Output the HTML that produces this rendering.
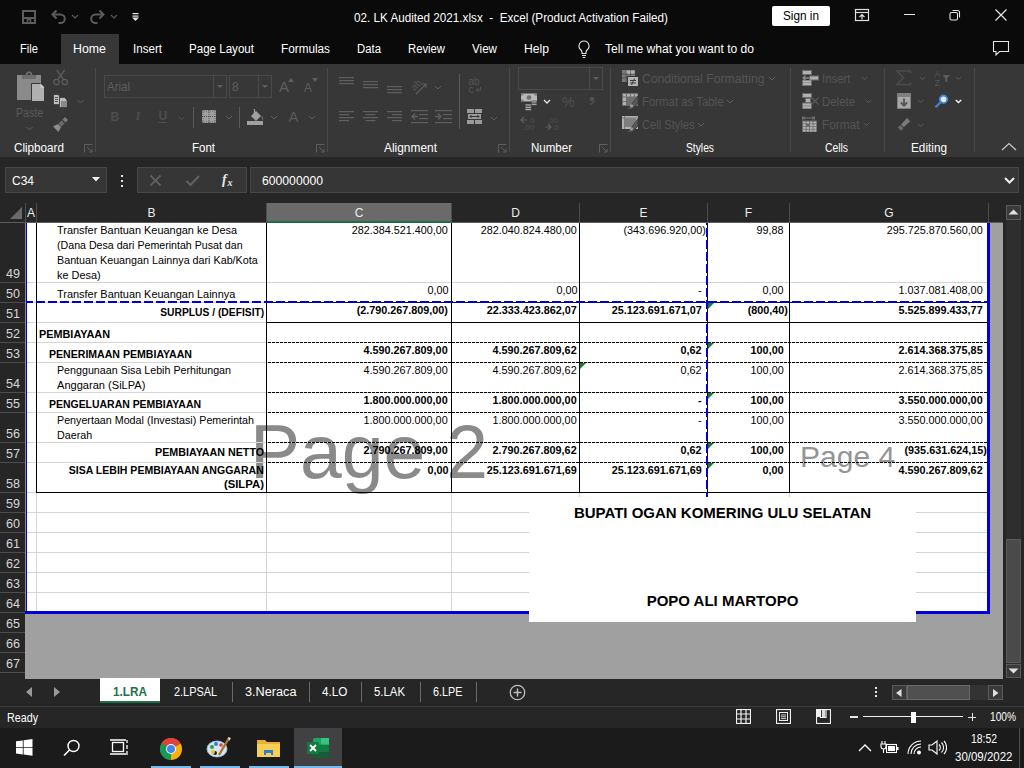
<!DOCTYPE html>
<html><head><meta charset="utf-8"><style>
html,body{margin:0;padding:0;width:1024px;height:768px;overflow:hidden;background:#262626;font-family:'Liberation Sans', sans-serif;}
#root{position:relative;width:1024px;height:768px;overflow:hidden;}
#root>div{position:absolute;}
</style></head><body><div id="root">
<div style="left:0px;top:0px;width:1024px;height:64px;background:#0a0a0a;"></div>
<svg style="position:absolute;left:21px;top:9px;" width="16" height="16" viewBox="0 0 16 16"><path d="M2 2h12v12h-12z" fill="none" stroke="#5c5c5c" stroke-width="2"/><path d="M2 9h12" stroke="#5c5c5c" stroke-width="2"/><path d="M6.5 14v-3.5h3v3.5" fill="none" stroke="#5c5c5c" stroke-width="1.5"/></svg>
<svg style="position:absolute;left:50px;top:8px;" width="17" height="17" viewBox="0 0 17 17"><path d="M3 6.5h7.5a4.3 4.3 0 0 1 0 8.6h-2" fill="none" stroke="#5c5c5c" stroke-width="2"/><path d="M6.5 2.5l-4 4l4 4" fill="none" stroke="#5c5c5c" stroke-width="2"/></svg>
<svg style="position:absolute;left:71px;top:14px;" width="8" height="5" viewBox="0 0 8 5"><path d="M1 1l3 3l3-3" fill="none" stroke="#5c5c5c" stroke-width="1.1"/></svg>
<svg style="position:absolute;left:89px;top:8px;" width="17" height="17" viewBox="0 0 17 17"><path d="M14 6.5h-7.5a4.3 4.3 0 0 0 0 8.6h2" fill="none" stroke="#5c5c5c" stroke-width="2"/><path d="M10.5 2.5l4 4l-4 4" fill="none" stroke="#5c5c5c" stroke-width="2"/></svg>
<svg style="position:absolute;left:110px;top:14px;" width="8" height="5" viewBox="0 0 8 5"><path d="M1 1l3 3l3-3" fill="none" stroke="#5c5c5c" stroke-width="1.1"/></svg>
<svg style="position:absolute;left:131px;top:12px;" width="9" height="10" viewBox="0 0 9 10"><rect x="1.5" y="1" width="6" height="1.2" fill="#e6e6e6"/><rect x="1.5" y="3.5" width="6" height="1.2" fill="#e6e6e6"/><path d="M1 5.5h7l-3.5 3.5z" fill="#e6e6e6"/></svg>
<div style="left:772px;top:6px;width:58px;height:20px;background:#ffffff;border-radius:2px"></div>
<svg style="position:absolute;left:854px;top:8px;" width="16" height="14" viewBox="0 0 16 14"><rect x="1.5" y="1.5" width="13" height="11" fill="none" stroke="#e0e0e0" stroke-width="1.2"/><path d="M1.5 4.5h13" stroke="#e0e0e0" stroke-width="1.2"/><path d="M8 11.5v-5M5.5 9l2.5-2.5l2.5 2.5" fill="none" stroke="#e0e0e0" stroke-width="1.2"/></svg>
<div style="left:904px;top:14px;width:11px;height:1px;background:#e6e6e6;"></div>
<svg style="position:absolute;left:948px;top:8px;" width="14" height="14" viewBox="0 0 14 14"><rect x="2" y="4.5" width="7.5" height="7.5" rx="1.5" fill="none" stroke="#e6e6e6" stroke-width="1.1"/><path d="M4.5 2.5h5a2 2 0 0 1 2 2v5" fill="none" stroke="#e6e6e6" stroke-width="1.1"/></svg>
<svg style="position:absolute;left:994px;top:8px;" width="14" height="14" viewBox="0 0 14 14"><path d="M1.5 1.5l11 11M12.5 1.5l-11 11" stroke="#e6e6e6" stroke-width="1.2"/></svg>
<div style="left:61px;top:34px;width:58px;height:30px;background:#373737;"></div>
<svg style="position:absolute;left:576px;top:39px;" width="16" height="20" viewBox="0 0 16 20"><path d="M8 2a5 5 0 0 0-3 9c.8.7 1 1.5 1 2.5v1h4v-1c0-1 .2-1.8 1-2.5a5 5 0 0 0-3-9z" fill="none" stroke="#e6e6e6" stroke-width="1.1"/><path d="M6 16.5h4M6.8 18.5h2.4" stroke="#e6e6e6" stroke-width="1.1"/></svg>
<svg style="position:absolute;left:991px;top:39px;" width="20" height="18" viewBox="0 0 20 18"><path d="M2.5 2.5h15v10h-9l-3.5 3.5v-3.5h-2.5z" fill="none" stroke="#e6e6e6" stroke-width="1.1"/></svg>
<div style="left:0px;top:64px;width:1024px;height:93px;background:#373737;"></div>
<div style="left:0px;top:157px;width:1024px;height:46px;background:#262626;"></div>
<div style="left:95px;top:68px;width:1px;height:84px;background:#4a4a4a;"></div>
<div style="left:327px;top:68px;width:1px;height:84px;background:#4a4a4a;"></div>
<div style="left:509px;top:68px;width:1px;height:84px;background:#4a4a4a;"></div>
<div style="left:610px;top:68px;width:1px;height:84px;background:#4a4a4a;"></div>
<div style="left:790px;top:68px;width:1px;height:84px;background:#4a4a4a;"></div>
<div style="left:884px;top:68px;width:1px;height:84px;background:#4a4a4a;"></div>
<div style="left:974px;top:68px;width:1px;height:84px;background:#4a4a4a;"></div>
<svg style="position:absolute;left:84px;top:144px;" width="9" height="9" viewBox="0 0 9 9"><path d="M0.5 8.5v-8h8" fill="none" stroke="#5f5f5f" stroke-width="1"/><path d="M3 3l5 5M8 5v3h-3" fill="none" stroke="#5f5f5f" stroke-width="1"/></svg>
<svg style="position:absolute;left:316px;top:144px;" width="9" height="9" viewBox="0 0 9 9"><path d="M0.5 8.5v-8h8" fill="none" stroke="#5f5f5f" stroke-width="1"/><path d="M3 3l5 5M8 5v3h-3" fill="none" stroke="#5f5f5f" stroke-width="1"/></svg>
<svg style="position:absolute;left:498px;top:144px;" width="9" height="9" viewBox="0 0 9 9"><path d="M0.5 8.5v-8h8" fill="none" stroke="#5f5f5f" stroke-width="1"/><path d="M3 3l5 5M8 5v3h-3" fill="none" stroke="#5f5f5f" stroke-width="1"/></svg>
<svg style="position:absolute;left:599px;top:144px;" width="9" height="9" viewBox="0 0 9 9"><path d="M0.5 8.5v-8h8" fill="none" stroke="#5f5f5f" stroke-width="1"/><path d="M3 3l5 5M8 5v3h-3" fill="none" stroke="#5f5f5f" stroke-width="1"/></svg>
<svg style="position:absolute;left:15px;top:70px;" width="32" height="33" viewBox="0 0 32 33"><path d="M2 5h5v2.5h14v-2.5h5v25h-24z" fill="#8a8a8a"/><rect x="7" y="5" width="14" height="4" rx="1" fill="#6e6e6e"/><circle cx="14" cy="4.6" r="2.4" fill="none" stroke="#6e6e6e" stroke-width="1.6"/><path d="M16.5 13.5h9l4 4v14h-13z" fill="#b0b0b0" stroke="#373737" stroke-width="1"/><path d="M25.5 13.5v4h4z" fill="#d0d0d0"/></svg>
<svg style="position:absolute;left:25px;top:126px;" width="9" height="5" viewBox="0 0 9 5"><path d="M1.5 1l3 3l3-3" fill="none" stroke="#5f5f5f" stroke-width="1"/></svg>
<svg style="position:absolute;left:52px;top:69px;" width="18" height="17" viewBox="0 0 18 17"><circle cx="4.5" cy="13" r="2.7" fill="none" stroke="#5e5e5e" stroke-width="1.2"/><circle cx="12.8" cy="13" r="2.7" fill="none" stroke="#5e5e5e" stroke-width="1.2"/><path d="M5.8 10.6L12.6 1M11.5 10.6L4.7 1" stroke="#5e5e5e" stroke-width="1.3"/></svg>
<svg style="position:absolute;left:52px;top:93px;" width="18" height="16" viewBox="0 0 18 16"><path d="M1.5 1.5h4.5l1.5 1.5v8.5h-6z" fill="#bdbdbd" stroke="#373737" stroke-width="0.8"/><path d="M3 4.5h3M3 6.5h3M3 8.5h3" stroke="#4a4a4a" stroke-width="0.9"/><path d="M7.5 4.5h5l2.5 2.5v7.5h-7.5z" fill="#bdbdbd" stroke="#373737" stroke-width="0.8"/><path d="M9 9h5M9 11h5M9 13h5" stroke="#4a4a4a" stroke-width="0.9"/></svg>
<svg style="position:absolute;left:77px;top:99px;" width="8" height="5" viewBox="0 0 8 5"><path d="M0.5 1l3 3l3-3" fill="none" stroke="#5f5f5f" stroke-width="1"/></svg>
<svg style="position:absolute;left:52px;top:116px;" width="18" height="17" viewBox="0 0 18 17"><path d="M1 10.5l5-2.5l3 3l-2.5 5z" fill="#8c8c8c"/><path d="M6.5 7.5l3-3l3 3l-3 3z" fill="#6a6a6a"/><path d="M10.5 3.5l2.5-2.5l3 3l-2.5 2.5z" fill="#7a7a7a"/></svg>
<div style="left:104px;top:75px;width:123px;height:23px;box-sizing:border-box;border:1px solid #4a4a4a;background:transparent;"></div>
<div style="left:213px;top:76px;width:1px;height:21px;background:#4a4a4a;"></div>
<svg style="position:absolute;left:217px;top:85px;" width="6" height="4" viewBox="0 0 6 4"><path d="M0 0h6l-3 3z" fill="#5f5f5f"/></svg>
<div style="left:229px;top:75px;width:43px;height:23px;box-sizing:border-box;border:1px solid #4a4a4a;background:transparent;"></div>
<div style="left:258px;top:76px;width:1px;height:21px;background:#4a4a4a;"></div>
<svg style="position:absolute;left:262px;top:85px;" width="6" height="4" viewBox="0 0 6 4"><path d="M0 0h6l-3 3z" fill="#5f5f5f"/></svg>
<svg style="position:absolute;left:288px;top:78px;" width="6" height="4" viewBox="0 0 6 4"><path d="M0 4l3-4l3 4z" fill="#5f5f5f"/></svg>
<svg style="position:absolute;left:312px;top:78px;" width="6" height="4" viewBox="0 0 6 4"><path d="M0 0h6l-3 4z" fill="#5f5f5f"/></svg>
<div style="left:158px;top:122px;width:9px;height:1px;background:#4e4e4e;"></div>
<svg style="position:absolute;left:178px;top:116px;" width="7" height="5" viewBox="0 0 7 5"><path d="M0.8 1l2.7 2.5l2.7-2.5" fill="none" stroke="#555" stroke-width="1"/></svg>
<div style="left:193px;top:107px;width:1px;height:21px;background:#5a5a5a;"></div>
<svg style="position:absolute;left:202px;top:110px;" width="14" height="13" viewBox="0 0 14 13"><rect x="0" y="0" width="14" height="13" fill="#a0a0a0"/><path d="M0 6.5h14M7 0v13" stroke="#373737" stroke-width="0.8" stroke-dasharray="1 1"/><path d="M0 1h14M0 12h14M1 0v13M13 0v13" stroke="#373737" stroke-width="0.6" stroke-dasharray="1 1"/></svg>
<svg style="position:absolute;left:225px;top:115px;" width="8" height="5" viewBox="0 0 8 5"><path d="M1 1l3 3l3-3" fill="none" stroke="#5f5f5f" stroke-width="1"/></svg>
<div style="left:239px;top:107px;width:1px;height:21px;background:#5a5a5a;"></div>
<svg style="position:absolute;left:247px;top:108px;" width="18" height="18" viewBox="0 0 18 18"><path d="M4 8l5-5l5 5l-5 5z" fill="#a0a0a0"/><path d="M7.5 1v6" stroke="#a0a0a0" stroke-width="1.2"/><path d="M14 8c1.5 1 2 2.5 1.5 4" fill="none" stroke="#606060" stroke-width="1.4"/><rect x="0" y="13" width="16" height="4" fill="#a0a0a0"/></svg>
<svg style="position:absolute;left:270px;top:115px;" width="8" height="5" viewBox="0 0 8 5"><path d="M1 1l3 3l3-3" fill="none" stroke="#5f5f5f" stroke-width="1"/></svg>
<svg style="position:absolute;left:308px;top:115px;" width="8" height="5" viewBox="0 0 8 5"><path d="M1 1l3 3l3-3" fill="none" stroke="#5f5f5f" stroke-width="1"/></svg>
<svg style="position:absolute;left:339px;top:77px;" width="16" height="10" viewBox="0 0 16 10"><rect x="0" y="0" width="15" height="1.2" fill="#5f5f5f"/><rect x="0" y="3" width="15" height="1.2" fill="#5f5f5f"/><rect x="0" y="6" width="15" height="1.2" fill="#5f5f5f"/></svg>
<svg style="position:absolute;left:363px;top:81px;" width="16" height="10" viewBox="0 0 16 10"><rect x="0" y="0" width="15" height="1.2" fill="#5f5f5f"/><rect x="0" y="3" width="15" height="1.2" fill="#5f5f5f"/><rect x="0" y="6" width="15" height="1.2" fill="#5f5f5f"/></svg>
<svg style="position:absolute;left:387px;top:86px;" width="16" height="10" viewBox="0 0 16 10"><rect x="0" y="0" width="15" height="1.2" fill="#5f5f5f"/><rect x="0" y="3" width="15" height="1.2" fill="#5f5f5f"/><rect x="0" y="6" width="15" height="1.2" fill="#5f5f5f"/></svg>
<svg style="position:absolute;left:410px;top:76px;" width="20" height="19" viewBox="0 0 20 19"><text x="0" y="12" font-size="10" fill="#555" transform="rotate(-45 6 8)" font-family="Liberation Sans">ab</text><path d="M6 18l10-10M12 8h4v4" fill="none" stroke="#5f5f5f" stroke-width="1.1"/></svg>
<svg style="position:absolute;left:434px;top:85px;" width="8" height="5" viewBox="0 0 8 5"><path d="M1 1l3 3l3-3" fill="none" stroke="#5f5f5f" stroke-width="1"/></svg>
<svg style="position:absolute;left:339px;top:111px;" width="16" height="12" viewBox="0 0 16 12"><rect x="0" y="0" width="15" height="1.2" fill="#5f5f5f"/><rect x="0" y="3" width="10" height="1.2" fill="#5f5f5f"/><rect x="0" y="6" width="15" height="1.2" fill="#5f5f5f"/><rect x="0" y="9" width="10" height="1.2" fill="#5f5f5f"/></svg>
<svg style="position:absolute;left:363px;top:111px;" width="16" height="12" viewBox="0 0 16 12"><rect x="0.0" y="0" width="15" height="1.2" fill="#5f5f5f"/><rect x="2.5" y="3" width="10" height="1.2" fill="#5f5f5f"/><rect x="0.0" y="6" width="15" height="1.2" fill="#5f5f5f"/><rect x="2.5" y="9" width="10" height="1.2" fill="#5f5f5f"/></svg>
<svg style="position:absolute;left:387px;top:111px;" width="16" height="12" viewBox="0 0 16 12"><rect x="0" y="0" width="15" height="1.2" fill="#5f5f5f"/><rect x="5" y="3" width="10" height="1.2" fill="#5f5f5f"/><rect x="0" y="6" width="15" height="1.2" fill="#5f5f5f"/><rect x="5" y="9" width="10" height="1.2" fill="#5f5f5f"/></svg>
<svg style="position:absolute;left:411px;top:110px;" width="18" height="14" viewBox="0 0 18 14"><rect x="0" y="0" width="17" height="1.2" fill="#5f5f5f"/><rect x="0" y="12" width="17" height="1.2" fill="#5f5f5f"/><rect x="8" y="4" width="9" height="1.2" fill="#5f5f5f"/><rect x="8" y="8" width="9" height="1.2" fill="#5f5f5f"/><path d="M1 6.5h6M4 3.5l-3 3l3 3" fill="none" stroke="#5f5f5f" stroke-width="1.4"/></svg>
<svg style="position:absolute;left:435px;top:110px;" width="18" height="14" viewBox="0 0 18 14"><rect x="0" y="0" width="17" height="1.2" fill="#5f5f5f"/><rect x="0" y="12" width="17" height="1.2" fill="#5f5f5f"/><rect x="8" y="4" width="9" height="1.2" fill="#5f5f5f"/><rect x="8" y="8" width="9" height="1.2" fill="#5f5f5f"/><path d="M0 6.5h6M3 3.5l3 3l-3 3" fill="none" stroke="#5f5f5f" stroke-width="1.4"/></svg>
<div style="left:459px;top:74px;width:1px;height:55px;background:#5a5a5a;"></div>
<svg style="position:absolute;left:468px;top:77px;" width="16" height="17" viewBox="0 0 16 17"><text x="0.5" y="8" font-size="10" fill="#555" font-family="Liberation Sans">ab</text><text x="0.5" y="16" font-size="10" fill="#555" font-family="Liberation Sans">c</text><path d="M12.5 10v3h-4M10 11.5l-1.8 1.5l1.8 1.5" fill="none" stroke="#555" stroke-width="1"/></svg>
<svg style="position:absolute;left:467px;top:109px;" width="16" height="16" viewBox="0 0 16 16"><rect x="0" y="0" width="15" height="15" fill="#9a9a9a"/><rect x="0" y="4" width="15" height="7" fill="#373737"/><rect x="1" y="5" width="13" height="5" fill="#9a9a9a"/><path d="M3 7.5h9M4.5 6l-1.5 1.5l1.5 1.5M10.5 6l1.5 1.5l-1.5 1.5" fill="none" stroke="#373737" stroke-width="1"/><path d="M7.5 0v4M7.5 11v4" stroke="#373737" stroke-width="1"/></svg>
<svg style="position:absolute;left:490px;top:116px;" width="8" height="5" viewBox="0 0 8 5"><path d="M1 1l3 3l3-3" fill="none" stroke="#5f5f5f" stroke-width="1"/></svg>
<div style="left:518px;top:67px;width:85px;height:23px;box-sizing:border-box;border:1px solid #4a4a4a;background:transparent;"></div>
<div style="left:589px;top:68px;width:1px;height:21px;background:#4a4a4a;"></div>
<svg style="position:absolute;left:593px;top:77px;" width="6" height="4" viewBox="0 0 6 4"><path d="M0 0h6l-3 3z" fill="#5f5f5f"/></svg>
<svg style="position:absolute;left:521px;top:93px;" width="17" height="18" viewBox="0 0 17 18"><rect x="0" y="0.5" width="16" height="8" fill="#b8b8b8"/><path d="M0 0.5h2.5v2H0zM13.5 0.5H16v2h-2.5zM0 6.5h2.5v2H0z" fill="#7a7a7a"/><circle cx="8" cy="4.5" r="2.3" fill="#6e6e6e"/><g fill="#b8b8b8" stroke="#373737" stroke-width="0.7"><rect x="10" y="8" width="6" height="2" rx="1"/><rect x="10" y="10.3" width="6" height="2" rx="1"/><rect x="4" y="11" width="6.5" height="2" rx="1"/><rect x="4" y="13.3" width="6.5" height="2" rx="1"/><rect x="4" y="15.6" width="6.5" height="2" rx="1"/></g></svg>
<svg style="position:absolute;left:543px;top:99px;" width="8" height="5" viewBox="0 0 8 5"><path d="M1 1l3 3l3-3" fill="none" stroke="#e6e6e6" stroke-width="1.3"/></svg>
<svg style="position:absolute;left:588px;top:96px;" width="8" height="9" viewBox="0 0 8 9"><circle cx="4" cy="3" r="2.3" fill="#505050"/><path d="M5.8 3.5c0 2.5-1.5 4.2-3.5 5" fill="none" stroke="#505050" stroke-width="1.6"/></svg>
<svg style="position:absolute;left:520px;top:115px;" width="18" height="17" viewBox="0 0 18 17"><path d="M1 5h6M4 2l-3 3l3 3" fill="none" stroke="#5f5f5f" stroke-width="1.2"/><text x="8" y="8" font-size="8" fill="#505050" font-family="Liberation Sans">.0</text><text x="3" y="15" font-size="8" fill="#505050" font-family="Liberation Sans">.00</text></svg>
<svg style="position:absolute;left:544px;top:115px;" width="18" height="17" viewBox="0 0 18 17"><text x="3" y="8" font-size="8" fill="#505050" font-family="Liberation Sans">.00</text><path d="M1 12h6M4 9l3 3l-3 3" fill="none" stroke="#5f5f5f" stroke-width="1.2"/><text x="8" y="15" font-size="8" fill="#505050" font-family="Liberation Sans">.0</text></svg>
<svg style="position:absolute;left:622px;top:70px;" width="17" height="17" viewBox="0 0 17 17"><rect x="0" y="0" width="13" height="12" fill="#7a7a7a"/><path d="M0 4h13M0 8h13M4.3 0v12M8.6 0v12" stroke="#4a4a4a" stroke-width="0.8"/><rect x="8.8" y="0.5" width="3.8" height="3.2" fill="#b0b0b0"/><rect x="4.5" y="0.5" width="3.8" height="3.2" fill="#b0b0b0"/><rect x="5.5" y="6.5" width="11" height="10" fill="#b4b4b4" stroke="#373737" stroke-width="1"/><path d="M8 10.5h6M8 13h6M12.5 8.5l-3 6.5" stroke="#3a3a3a" stroke-width="1"/></svg>
<svg style="position:absolute;left:768px;top:76px;" width="8" height="5" viewBox="0 0 8 5"><path d="M1 1l3 3l3-3" fill="none" stroke="#5f5f5f" stroke-width="1"/></svg>
<svg style="position:absolute;left:622px;top:93px;" width="17" height="17" viewBox="0 0 17 17"><rect x="0" y="0" width="16" height="13" fill="#6e6e6e"/><g fill="#b0b0b0"><rect x="1" y="1" width="3" height="2.5"/><rect x="5" y="1" width="3" height="2.5"/><rect x="9" y="1" width="3" height="2.5"/><rect x="13" y="1" width="2.5" height="2.5"/><rect x="1" y="4.5" width="3" height="3.5"/><rect x="1" y="9" width="3" height="3"/></g><path d="M3.5 16.5l4-2.5l8.5-11v7l-6 6z" fill="#5a5a5a" stroke="#373737" stroke-width="0.8"/><circle cx="9.5" cy="12.8" r="1.6" fill="#9a9a9a"/></svg>
<svg style="position:absolute;left:726px;top:99px;" width="8" height="5" viewBox="0 0 8 5"><path d="M1 1l3 3l3-3" fill="none" stroke="#5f5f5f" stroke-width="1"/></svg>
<svg style="position:absolute;left:622px;top:116px;" width="17" height="17" viewBox="0 0 17 17"><rect x="0" y="0" width="16" height="13" fill="#b0b0b0"/><rect x="3" y="2.5" width="11" height="8.5" fill="#7e7e7e"/><path d="M0 2h16M2.5 0v13" stroke="#6e6e6e" stroke-width="0.8"/><path d="M3.5 16.5l4-2.5l8.5-11v7l-6 6z" fill="#5a5a5a" stroke="#373737" stroke-width="0.8"/><circle cx="9.5" cy="12.8" r="1.6" fill="#9a9a9a"/></svg>
<svg style="position:absolute;left:697px;top:122px;" width="8" height="5" viewBox="0 0 8 5"><path d="M1 1l3 3l3-3" fill="none" stroke="#5f5f5f" stroke-width="1"/></svg>
<svg style="position:absolute;left:802px;top:70px;" width="18" height="17" viewBox="0 0 18 17"><rect x="0" y="0" width="10" height="5" fill="#6a6a6a"/><rect x="1" y="1" width="4" height="3" fill="#b0b0b0"/><rect x="5" y="1" width="4" height="3" fill="#b0b0b0"/><rect x="7" y="5.5" width="10" height="5" fill="#6a6a6a"/><rect x="8" y="6.5" width="4" height="3" fill="#b0b0b0"/><rect x="12" y="6.5" width="4" height="3" fill="#b0b0b0"/><rect x="0" y="10" width="10" height="6" fill="#6a6a6a"/><rect x="1" y="10.5" width="4" height="2.2" fill="#b0b0b0"/><rect x="5" y="10.5" width="4" height="2.2" fill="#b0b0b0"/><rect x="1" y="13" width="4" height="2.2" fill="#b0b0b0"/><rect x="5" y="13" width="4" height="2.2" fill="#b0b0b0"/><path d="M1 8h6M3.5 5.5L1 8l2.5 2.5" fill="none" stroke="#8a8a8a" stroke-width="1.3"/></svg>
<svg style="position:absolute;left:861px;top:76px;" width="7" height="5" viewBox="0 0 7 5"><path d="M0.8 1l2.7 2.5l2.7-2.5" fill="none" stroke="#5a5a5a" stroke-width="1"/></svg>
<svg style="position:absolute;left:802px;top:93px;" width="18" height="17" viewBox="0 0 18 17"><rect x="0" y="0" width="10" height="5" fill="#6a6a6a"/><rect x="1" y="1" width="4" height="3" fill="#b0b0b0"/><rect x="5" y="1" width="4" height="3" fill="#b0b0b0"/><rect x="3" y="5" width="6" height="5" fill="#6a6a6a"/><rect x="4" y="6" width="4" height="3" fill="#b0b0b0"/><rect x="0" y="9.5" width="10" height="6.5" fill="#6a6a6a"/><rect x="1" y="10.5" width="4" height="2.2" fill="#b0b0b0"/><rect x="5" y="10.5" width="4" height="2.2" fill="#b0b0b0"/><rect x="1" y="13.2" width="4" height="2.2" fill="#b0b0b0"/><rect x="5" y="13.2" width="4" height="2.2" fill="#b0b0b0"/><path d="M9.5 4.5l7 7M16.5 4.5l-7 7" stroke="#5a5a5a" stroke-width="1.2"/></svg>
<svg style="position:absolute;left:865px;top:99px;" width="7" height="5" viewBox="0 0 7 5"><path d="M0.8 1l2.7 2.5l2.7-2.5" fill="none" stroke="#5a5a5a" stroke-width="1"/></svg>
<svg style="position:absolute;left:802px;top:116px;" width="18" height="17" viewBox="0 0 18 17"><path d="M0.5 0.5v3M12.5 0.5v3M1 2h11M3 0.5L1 2l2 1.5M10 0.5L12 2l-2 1.5" fill="none" stroke="#7a7a7a" stroke-width="0.9"/><rect x="0" y="4.5" width="15" height="11.5" fill="#6a6a6a"/><rect x="1" y="5.5" width="2.7" height="2" fill="#b0b0b0"/><rect x="4.5" y="5.5" width="2.7" height="2" fill="#b0b0b0"/><rect x="8" y="5.5" width="2.7" height="2" fill="#b0b0b0"/><rect x="11.5" y="5.5" width="2.7" height="2" fill="#b0b0b0"/><rect x="1" y="8.2" width="2.7" height="2" fill="#b0b0b0"/><rect x="8" y="8.2" width="2.7" height="2" fill="#b0b0b0"/><rect x="11.5" y="8.2" width="2.7" height="2" fill="#b0b0b0"/><rect x="1" y="10.9" width="2.7" height="2" fill="#b0b0b0"/><rect x="4.5" y="10.9" width="2.7" height="2" fill="#b0b0b0"/><rect x="8" y="10.9" width="2.7" height="2" fill="#b0b0b0"/><rect x="11.5" y="10.9" width="2.7" height="2" fill="#b0b0b0"/><rect x="1" y="13.6" width="2.7" height="2" fill="#b0b0b0"/><rect x="4.5" y="13.6" width="2.7" height="2" fill="#b0b0b0"/><rect x="8" y="13.6" width="2.7" height="2" fill="#b0b0b0"/><rect x="11.5" y="13.6" width="2.7" height="2" fill="#b0b0b0"/></svg>
<svg style="position:absolute;left:863px;top:122px;" width="7" height="5" viewBox="0 0 7 5"><path d="M0.8 1l2.7 2.5l2.7-2.5" fill="none" stroke="#5a5a5a" stroke-width="1"/></svg>
<svg style="position:absolute;left:895px;top:69px;" width="18" height="18" viewBox="0 0 18 18"><path d="M15.5 4.2V2H2l6.5 6.8L2 15.5h13.5v-2.2" fill="none" stroke="#4c4c4c" stroke-width="1.6"/></svg>
<svg style="position:absolute;left:919px;top:76px;" width="7" height="5" viewBox="0 0 7 5"><path d="M0.8 1l2.7 2.5l2.7-2.5" fill="none" stroke="#5a5a5a" stroke-width="1"/></svg>
<svg style="position:absolute;left:934px;top:69px;" width="18" height="18" viewBox="0 0 18 18"><text x="0.5" y="7.5" font-size="8.5" fill="#555" font-family="Liberation Sans">A</text><text x="0.8" y="17" font-size="8.5" fill="#555" font-family="Liberation Sans">Z</text><path d="M8.5 6h7.5l-2.8 3.2v3.8h-2v-3.8z" fill="#5c5c5c"/></svg>
<svg style="position:absolute;left:955px;top:76px;" width="7" height="5" viewBox="0 0 7 5"><path d="M0.8 1l2.7 2.5l2.7-2.5" fill="none" stroke="#5a5a5a" stroke-width="1"/></svg>
<svg style="position:absolute;left:897px;top:93px;" width="15" height="16" viewBox="0 0 15 16"><rect x="0" y="0" width="14" height="16" fill="#7e7e7e"/><rect x="1" y="4" width="12" height="11" fill="#a8a8a8"/><path d="M7 5.5v7.5M3.8 9.5l3.2 3.2l3.2-3.2" fill="none" stroke="#555" stroke-width="1.8"/></svg>
<svg style="position:absolute;left:917px;top:99px;" width="7" height="5" viewBox="0 0 7 5"><path d="M0.8 1l2.7 2.5l2.7-2.5" fill="none" stroke="#5a5a5a" stroke-width="1"/></svg>
<svg style="position:absolute;left:935px;top:94px;" width="15" height="14" viewBox="0 0 15 14"><circle cx="8.5" cy="5.3" r="3.8" fill="#e6e6e6" stroke="#3d85d0" stroke-width="1.8"/><path d="M5.8 8l-4.6 4.6" stroke="#3d85d0" stroke-width="2.2" stroke-linecap="round"/></svg>
<svg style="position:absolute;left:955px;top:99px;" width="7" height="5" viewBox="0 0 7 5"><path d="M0.8 1l2.7 2.5l2.7-2.5" fill="none" stroke="#f0f0f0" stroke-width="1.6"/></svg>
<svg style="position:absolute;left:897px;top:116px;" width="14" height="15" viewBox="0 0 14 15"><path d="M4 8.5l6-6.5l3.2 3.2l-6.5 6z" fill="#7a7a7a"/><path d="M0.8 11.5l2.5-2.5l3.2 3.2l-2.5 2.5z" fill="#6a6a6a"/></svg>
<svg style="position:absolute;left:917px;top:123px;" width="7" height="5" viewBox="0 0 7 5"><path d="M0.8 1l2.7 2.5l2.7-2.5" fill="none" stroke="#5a5a5a" stroke-width="1"/></svg>
<svg style="position:absolute;left:1001px;top:142px;" width="16" height="10" viewBox="0 0 16 10"><path d="M1 8l7-6.5l7 6.5" fill="none" stroke="#c8c8c8" stroke-width="1.2"/></svg>
<div style="left:5px;top:167px;width:102px;height:26px;box-sizing:border-box;border:1px solid #474747;background:#363636;"></div>
<svg style="position:absolute;left:92px;top:177px;" width="9" height="5" viewBox="0 0 9 5"><path d="M0 0h8l-4 4.5z" fill="#f0f0f0"/></svg>
<div style="left:121px;top:175px;width:2px;height:2px;background:#e6e6e6;"></div>
<div style="left:121px;top:180px;width:2px;height:2px;background:#e6e6e6;"></div>
<div style="left:121px;top:185px;width:2px;height:2px;background:#e6e6e6;"></div>
<div style="left:137px;top:167px;width:110px;height:26px;box-sizing:border-box;border:1px solid #474747;background:#363636;"></div>
<svg style="position:absolute;left:149px;top:174px;" width="13" height="13" viewBox="0 0 13 13"><path d="M1.5 1.5l10 10M11.5 1.5l-10 10" stroke="#5f5f5f" stroke-width="1.8"/></svg>
<svg style="position:absolute;left:185px;top:174px;" width="15" height="13" viewBox="0 0 15 13"><path d="M1.5 7l4 4l8.5-9" fill="none" stroke="#5f5f5f" stroke-width="2.2"/></svg>
<div style="left:250px;top:167px;width:769px;height:26px;box-sizing:border-box;border:1px solid #474747;background:#363636;"></div>
<svg style="position:absolute;left:1004px;top:177px;" width="11" height="7" viewBox="0 0 11 7"><path d="M1 1l4.5 4.5l4.5-4.5" fill="none" stroke="#f0f0f0" stroke-width="2"/></svg>
<div style="left:0px;top:203px;width:1003px;height:20px;background:#262626;"></div>
<div style="left:0px;top:222px;width:1003px;height:1px;background:#5c5c5c;"></div>
<svg style="position:absolute;left:10px;top:207px;" width="13" height="13" viewBox="0 0 13 13"><path d="M12 0v12h-12z" fill="#6a6a6a"/></svg>
<div style="left:266px;top:203px;width:185px;height:19px;background:#6a6a6a;"></div>
<div style="left:266px;top:221px;width:185px;height:2px;background:#1d7044;"></div>
<div style="left:25px;top:203px;width:1px;height:19px;background:#4d4d4d;"></div>
<div style="left:36px;top:203px;width:1px;height:19px;background:#4d4d4d;"></div>
<div style="left:266px;top:203px;width:1px;height:19px;background:#4d4d4d;"></div>
<div style="left:451px;top:203px;width:1px;height:19px;background:#4d4d4d;"></div>
<div style="left:579px;top:203px;width:1px;height:19px;background:#4d4d4d;"></div>
<div style="left:707px;top:203px;width:1px;height:19px;background:#4d4d4d;"></div>
<div style="left:789px;top:203px;width:1px;height:19px;background:#4d4d4d;"></div>
<div style="left:988px;top:203px;width:1px;height:19px;background:#4d4d4d;"></div>
<div style="left:25px;top:223px;width:978px;height:456px;background:#a0a0a0;"></div>
<div style="left:26px;top:223px;width:962px;height:391px;background:#ffffff;"></div>
<div style="position:absolute;left:250px;top:406.5px;font-size:76px;line-height:90px;color:rgba(128,128,128,0.92);white-space:pre;transform:scaleX(0.988);transform-origin:left top;">Page 2</div>
<div style="position:absolute;left:800px;top:438.5px;font-size:30px;line-height:36px;color:#949494;white-space:pre;">Page 4</div>
<div style="left:0px;top:223px;width:25px;height:456px;background:#262626;"></div>
<div style="left:0px;top:282px;width:25px;height:1px;background:#4d4d4d;"></div>
<div style="left:0px;top:302px;width:25px;height:1px;background:#4d4d4d;"></div>
<div style="left:0px;top:322px;width:25px;height:1px;background:#4d4d4d;"></div>
<div style="left:0px;top:342px;width:25px;height:1px;background:#4d4d4d;"></div>
<div style="left:0px;top:362px;width:25px;height:1px;background:#4d4d4d;"></div>
<div style="left:0px;top:392px;width:25px;height:1px;background:#4d4d4d;"></div>
<div style="left:0px;top:412px;width:25px;height:1px;background:#4d4d4d;"></div>
<div style="left:0px;top:442px;width:25px;height:1px;background:#4d4d4d;"></div>
<div style="left:0px;top:462px;width:25px;height:1px;background:#4d4d4d;"></div>
<div style="left:0px;top:492px;width:25px;height:1px;background:#4d4d4d;"></div>
<div style="left:0px;top:512px;width:25px;height:1px;background:#4d4d4d;"></div>
<div style="left:0px;top:532px;width:25px;height:1px;background:#4d4d4d;"></div>
<div style="left:0px;top:552px;width:25px;height:1px;background:#4d4d4d;"></div>
<div style="left:0px;top:572px;width:25px;height:1px;background:#4d4d4d;"></div>
<div style="left:0px;top:592px;width:25px;height:1px;background:#4d4d4d;"></div>
<div style="left:0px;top:612px;width:25px;height:1px;background:#4d4d4d;"></div>
<div style="left:0px;top:632px;width:25px;height:1px;background:#4d4d4d;"></div>
<div style="left:0px;top:652px;width:25px;height:1px;background:#4d4d4d;"></div>
<div style="left:0px;top:672px;width:25px;height:1px;background:#4d4d4d;"></div>
<div style="left:0px;top:692px;width:25px;height:1px;background:#4d4d4d;"></div>
<div style="left:26px;top:282px;width:962px;height:1px;background:#d4d4d4;"></div>
<div style="left:26px;top:302px;width:962px;height:1px;background:#d4d4d4;"></div>
<div style="left:26px;top:322px;width:962px;height:1px;background:#d4d4d4;"></div>
<div style="left:26px;top:342px;width:962px;height:1px;background:#d4d4d4;"></div>
<div style="left:26px;top:362px;width:962px;height:1px;background:#d4d4d4;"></div>
<div style="left:26px;top:392px;width:962px;height:1px;background:#d4d4d4;"></div>
<div style="left:26px;top:412px;width:962px;height:1px;background:#d4d4d4;"></div>
<div style="left:26px;top:442px;width:962px;height:1px;background:#d4d4d4;"></div>
<div style="left:26px;top:462px;width:962px;height:1px;background:#d4d4d4;"></div>
<div style="left:26px;top:492px;width:962px;height:1px;background:#d4d4d4;"></div>
<div style="left:26px;top:512px;width:962px;height:1px;background:#d4d4d4;"></div>
<div style="left:26px;top:532px;width:962px;height:1px;background:#d4d4d4;"></div>
<div style="left:26px;top:552px;width:962px;height:1px;background:#d4d4d4;"></div>
<div style="left:26px;top:572px;width:962px;height:1px;background:#d4d4d4;"></div>
<div style="left:26px;top:592px;width:962px;height:1px;background:#d4d4d4;"></div>
<div style="left:26px;top:612px;width:962px;height:1px;background:#d4d4d4;"></div>
<div style="left:36px;top:223px;width:1px;height:390px;background:#d4d4d4;"></div>
<div style="left:266px;top:223px;width:1px;height:390px;background:#d4d4d4;"></div>
<div style="left:451px;top:223px;width:1px;height:390px;background:#d4d4d4;"></div>
<div style="left:579px;top:223px;width:1px;height:390px;background:#d4d4d4;"></div>
<div style="left:707px;top:223px;width:1px;height:390px;background:#d4d4d4;"></div>
<div style="left:789px;top:223px;width:1px;height:390px;background:#d4d4d4;"></div>
<div style="left:36px;top:223px;width:1px;height:270px;background:#000000;"></div>
<div style="left:266px;top:223px;width:1px;height:270px;background:#000000;"></div>
<div style="left:451px;top:223px;width:1px;height:270px;background:#000000;"></div>
<div style="left:579px;top:223px;width:1px;height:270px;background:#000000;"></div>
<div style="left:707px;top:223px;width:1px;height:270px;background:#000000;"></div>
<div style="left:789px;top:223px;width:1px;height:270px;background:#000000;"></div>
<div style="left:266px;top:302px;width:722px;height:1px;background:#000000;"></div>
<div style="left:266px;top:322px;width:722px;height:1px;background:#000000;"></div>
<div style="left:267px;top:342px;width:720px;height:1px;background:transparent;background-image:repeating-linear-gradient(90deg,#000 0 3px,transparent 3px 4px);background-position:-3px 0;"></div>
<div style="left:267px;top:362px;width:720px;height:1px;background:transparent;background-image:repeating-linear-gradient(90deg,#000 0 3px,transparent 3px 4px);background-position:-3px 0;"></div>
<div style="left:267px;top:392px;width:720px;height:1px;background:transparent;background-image:repeating-linear-gradient(90deg,#000 0 3px,transparent 3px 4px);background-position:-3px 0;"></div>
<div style="left:267px;top:412px;width:720px;height:1px;background:transparent;background-image:repeating-linear-gradient(90deg,#000 0 3px,transparent 3px 4px);background-position:-3px 0;"></div>
<div style="left:267px;top:442px;width:720px;height:1px;background:transparent;background-image:repeating-linear-gradient(90deg,#000 0 3px,transparent 3px 4px);background-position:-3px 0;"></div>
<div style="left:267px;top:462px;width:720px;height:1px;background:transparent;background-image:repeating-linear-gradient(90deg,#000 0 3px,transparent 3px 4px);background-position:-3px 0;"></div>
<div style="left:36px;top:492px;width:952px;height:1px;background:#000000;"></div>
<div style="left:25px;top:223px;width:1px;height:390px;background:#8a8a8a;"></div>
<div style="left:26px;top:223px;width:1px;height:391px;background:#0000d4;"></div>
<div style="left:987px;top:223px;width:3px;height:391px;background:#0000d4;"></div>
<div style="left:25px;top:611px;width:965px;height:3px;background:#0000d4;"></div>
<div style="left:26px;top:301px;width:961px;height:2px;background:transparent;background-image:repeating-linear-gradient(90deg,#0000d4 0 9px,transparent 9px 12px);background-position:-2px 0;"></div>
<div style="left:706px;top:223px;width:2px;height:387px;background:transparent;background-image:repeating-linear-gradient(180deg,#0000d4 0 9px,transparent 9px 12px);background-position:0 -7px;"></div>
<svg style="position:absolute;left:708px;top:303px;" width="6" height="6" viewBox="0 0 6 6"><path d="M0 0h6L0 6z" fill="#127c2c"/></svg>
<svg style="position:absolute;left:708px;top:343px;" width="6" height="6" viewBox="0 0 6 6"><path d="M0 0h6L0 6z" fill="#127c2c"/></svg>
<svg style="position:absolute;left:708px;top:393px;" width="6" height="6" viewBox="0 0 6 6"><path d="M0 0h6L0 6z" fill="#127c2c"/></svg>
<svg style="position:absolute;left:708px;top:443px;" width="6" height="6" viewBox="0 0 6 6"><path d="M0 0h6L0 6z" fill="#127c2c"/></svg>
<svg style="position:absolute;left:708px;top:463px;" width="6" height="6" viewBox="0 0 6 6"><path d="M0 0h6L0 6z" fill="#127c2c"/></svg>
<svg style="position:absolute;left:580px;top:363px;" width="6" height="6" viewBox="0 0 6 6"><path d="M0 0h6L0 6z" fill="#127c2c"/></svg>
<div style="left:1003px;top:203px;width:21px;height:475px;background:#262626;"></div>
<div style="left:1006px;top:205px;width:15px;height:15px;box-sizing:border-box;border:1px solid #5a5a5a;background:#3a3a3a;"></div>
<svg style="position:absolute;left:1008px;top:209px;" width="11" height="6" viewBox="0 0 11 6"><path d="M0.5 5.5l5-5l5 5z" fill="#e0e0e0"/></svg>
<div style="left:1006px;top:220px;width:15px;height:444px;background:#2e2e2e;"></div>
<div style="left:1006px;top:539px;width:15px;height:124px;box-sizing:border-box;border:1px solid #5a5a5a;background:#4a4a4a;"></div>
<div style="left:1006px;top:664px;width:15px;height:14px;box-sizing:border-box;border:1px solid #5a5a5a;background:#3a3a3a;"></div>
<svg style="position:absolute;left:1008px;top:668px;" width="11" height="6" viewBox="0 0 11 6"><path d="M0.5 0.5h10l-5 5z" fill="#e0e0e0"/></svg>
<div style="left:0px;top:679px;width:1024px;height:27px;background:#262626;"></div>
<svg style="position:absolute;left:26px;top:687px;" width="7" height="10" viewBox="0 0 7 10"><path d="M6 0v10L0 5z" fill="#9a9a9a"/></svg>
<svg style="position:absolute;left:54px;top:687px;" width="7" height="10" viewBox="0 0 7 10"><path d="M0 0v10l6-5z" fill="#9a9a9a"/></svg>
<div style="left:100px;top:678px;width:60px;height:25px;background:#ffffff;"></div>
<div style="left:100px;top:701px;width:60px;height:2px;background:#1e7145;"></div>
<div style="left:232px;top:682px;width:1px;height:20px;background:#6a6a6a;"></div>
<div style="left:309px;top:682px;width:1px;height:20px;background:#6a6a6a;"></div>
<div style="left:361px;top:682px;width:1px;height:20px;background:#6a6a6a;"></div>
<div style="left:420px;top:682px;width:1px;height:20px;background:#6a6a6a;"></div>
<div style="left:476px;top:682px;width:1px;height:20px;background:#6a6a6a;"></div>
<svg style="position:absolute;left:509px;top:684px;" width="17" height="17" viewBox="0 0 17 17"><circle cx="8.5" cy="8.5" r="7.2" fill="none" stroke="#bdbdbd" stroke-width="1.3"/><path d="M8.5 4.5v8M4.5 8.5h8" stroke="#bdbdbd" stroke-width="1.5"/></svg>
<div style="left:875px;top:687px;width:2px;height:2px;background:#e6e6e6;"></div>
<div style="left:875px;top:691px;width:2px;height:2px;background:#e6e6e6;"></div>
<div style="left:875px;top:695px;width:2px;height:2px;background:#e6e6e6;"></div>
<div style="left:892px;top:685px;width:111px;height:15px;background:#333333;"></div>
<div style="left:892px;top:685px;width:15px;height:15px;box-sizing:border-box;border:1px solid #5a5a5a;background:#3a3a3a;"></div>
<svg style="position:absolute;left:896px;top:689px;" width="6" height="8" viewBox="0 0 6 8"><path d="M5.5 0v8L0 4z" fill="#e0e0e0"/></svg>
<div style="left:907px;top:685px;width:63px;height:15px;box-sizing:border-box;border:1px solid #6a6a6a;background:#505050;"></div>
<div style="left:988px;top:685px;width:15px;height:15px;box-sizing:border-box;border:1px solid #5a5a5a;background:#3a3a3a;"></div>
<svg style="position:absolute;left:993px;top:689px;" width="6" height="8" viewBox="0 0 6 8"><path d="M0 0v8l5.5-4z" fill="#e0e0e0"/></svg>
<div style="left:0px;top:706px;width:1024px;height:1px;background:#3c3c3c;"></div>
<div style="left:0px;top:707px;width:1024px;height:21px;background:#262626;"></div>
<svg style="position:absolute;left:736px;top:709px;" width="15" height="15" viewBox="0 0 15 15"><rect x="0.5" y="0.5" width="14" height="14" fill="none" stroke="#f0f0f0" stroke-width="1.2"/><path d="M5 0v15M10 0v15M0 5h15M0 10h15" stroke="#f0f0f0" stroke-width="1.2"/></svg>
<svg style="position:absolute;left:776px;top:709px;" width="15" height="15" viewBox="0 0 15 15"><rect x="0.5" y="0.5" width="14" height="14" fill="none" stroke="#f0f0f0" stroke-width="1.2"/><rect x="3.5" y="3.5" width="8" height="8" fill="none" stroke="#f0f0f0" stroke-width="1"/><path d="M5 6h5M5 7.8h5M5 9.6h5" stroke="#f0f0f0" stroke-width="0.8"/></svg>
<svg style="position:absolute;left:816px;top:709px;" width="15" height="15" viewBox="0 0 15 15"><rect x="0.5" y="0.5" width="14" height="14" fill="none" stroke="#f0f0f0" stroke-width="1.2"/><rect x="1" y="1" width="3" height="7" fill="#f0f0f0"/><rect x="6" y="1" width="3" height="7" fill="#dcdcdc"/><path d="M4.5 1v7.5h5.5v-7.5" fill="none" stroke="#f0f0f0" stroke-width="1.2"/></svg>
<div style="left:850px;top:716px;width:8px;height:1.5px;background:#e6e6e6;"></div>
<div style="left:863px;top:716px;width:100px;height:1px;background:#f0f0f0;"></div>
<div style="left:911px;top:712px;width:5px;height:11px;background:#ffffff;"></div>
<div style="left:968px;top:716.5px;width:8px;height:1.2px;background:#e6e6e6;"></div>
<div style="left:971.5px;top:713px;width:1.2px;height:8px;background:#e6e6e6;"></div>
<div style="left:0px;top:728px;width:1024px;height:40px;background:#1c1b1c;"></div>
<svg style="position:absolute;left:16px;top:739px;" width="17" height="17" viewBox="0 0 17 17"><path d="M0 2.3l6.8-0.9v6.6H0zM7.6 1.3L16.5 0v8H7.6zM0 8.8h6.8v6.6L0 14.5zM7.6 8.8h8.9v8L7.6 15.6z" fill="#ffffff"/></svg>
<svg style="position:absolute;left:63px;top:739px;" width="18" height="18" viewBox="0 0 18 18"><circle cx="10.5" cy="7" r="5.5" fill="none" stroke="#ffffff" stroke-width="1.4"/><path d="M6.5 11l-5.5 5.5" stroke="#ffffff" stroke-width="1.6"/></svg>
<svg style="position:absolute;left:110px;top:739px;" width="19" height="17" viewBox="0 0 19 17"><rect x="2.5" y="3.5" width="11" height="9" fill="none" stroke="#fff" stroke-width="1.3"/><path d="M0 1h16M0 15h16" stroke="#fff" stroke-width="1.3"/><path d="M17 1v3M17 6v4M17 12v4" stroke="#fff" stroke-width="1.3"/></svg>
<svg style="position:absolute;left:159px;top:737px;" width="24" height="24" viewBox="0 0 24 24"><circle cx="12" cy="12" r="11" fill="#db4437"/><path d="M12 12L2.5 6.5A11 11 0 0 0 12 23z" fill="#0f9d58"/><path d="M12 12L12 23A11 11 0 0 0 21.5 6.5z" fill="#f4b400"/><path d="M12 12L21.5 6.5A11 11 0 0 0 2.5 6.5z" fill="#db4437"/><path d="M12 12L2.5 6.5L7.2 14.8z" fill="#0f9d58"/><circle cx="12" cy="12" r="5" fill="#fff"/><circle cx="12" cy="12" r="4" fill="#4285f4"/></svg>
<svg style="position:absolute;left:206px;top:736px;" width="26" height="24" viewBox="0 0 26 24"><ellipse cx="11" cy="13" rx="10" ry="8" fill="#d4e6f2" stroke="#9cc2dc" stroke-width="0.8"/><circle cx="9" cy="17" r="2" fill="#1c1c1c"/><circle cx="6" cy="11" r="2" fill="#2d9c4a"/><circle cx="10" cy="8" r="2" fill="#3a7bd5"/><circle cx="15" cy="9" r="1.8" fill="#e04040"/><circle cx="7" cy="16" r="2" fill="#f0c020"/><path d="M13 19L23 2" stroke="#b07030" stroke-width="2.4"/><path d="M22 1l3 1-2 3z" fill="#e8e8e8"/></svg>
<svg style="position:absolute;left:256px;top:738px;" width="25" height="20" viewBox="0 0 25 20"><path d="M1 2h8l2 2h13v15H1z" fill="#e8b035"/><rect x="1" y="6" width="23" height="13" fill="#f6cf57"/><rect x="8" y="12" width="9" height="5" fill="#2b7cd3"/><rect x="10" y="15" width="5" height="4" fill="#f6cf57"/></svg>
<div style="left:294px;top:728px;width:48px;height:40px;background:#414042;"></div>
<svg style="position:absolute;left:306px;top:737px;" width="24" height="22" viewBox="0 0 24 22"><rect x="7" y="1" width="16" height="20" rx="1.5" fill="#21a366"/><rect x="7" y="7.5" width="16" height="7" fill="#107c41"/><rect x="15" y="1" width="8" height="6.5" fill="#33c481"/><rect x="7" y="14.5" width="16" height="6.5" fill="#185c37"/><rect x="1" y="5" width="12" height="12" rx="1" fill="#107c41"/><path d="M4 8l6 6M10 8l-6 6" stroke="#fff" stroke-width="1.8"/></svg>
<div style="left:151px;top:766px;width:40px;height:2px;background:#76b9ed;"></div>
<div style="left:200px;top:766px;width:40px;height:2px;background:#76b9ed;"></div>
<div style="left:249px;top:766px;width:40px;height:2px;background:#76b9ed;"></div>
<div style="left:294px;top:766px;width:48px;height:2px;background:#76b9ed;"></div>
<svg style="position:absolute;left:858px;top:743px;" width="14" height="9" viewBox="0 0 14 9"><path d="M1 8l6-6l6 6" fill="none" stroke="#fff" stroke-width="1.3"/></svg>
<svg style="position:absolute;left:880px;top:741px;" width="19" height="13" viewBox="0 0 19 13"><path d="M2 0v3M5 0v3M1 3h5v2.5a2.5 2.5 0 0 1-5 0z" fill="none" stroke="#fff" stroke-width="1.1"/><path d="M3.5 8v4" stroke="#fff" stroke-width="1.1"/><rect x="6.5" y="3.5" width="10" height="8" fill="none" stroke="#fff" stroke-width="1.1"/><rect x="8" y="5" width="7" height="5" fill="#fff"/><rect x="17" y="6" width="1.5" height="3" fill="#fff"/></svg>
<svg style="position:absolute;left:907px;top:740px;" width="16" height="15" viewBox="0 0 16 15"><path d="M1 14a13 13 0 0 1 13-13M4 14a10 10 0 0 1 10-10M7 14a7 7 0 0 1 7-7" fill="none" stroke="#fff" stroke-width="1.1"/><circle cx="12" cy="12.5" r="2" fill="#fff"/></svg>
<svg style="position:absolute;left:928px;top:740px;" width="19" height="15" viewBox="0 0 19 15"><path d="M1 5h3l5-4v13l-5-4H1z" fill="none" stroke="#fff" stroke-width="1.1"/><path d="M11 4.5a4 4 0 0 1 0 6M13.5 2.5a7 7 0 0 1 0 10M16 0.8a10 10 0 0 1 0 13.4" fill="none" stroke="#fff" stroke-width="1.1"/></svg>
<div style="left:1019px;top:728px;width:1px;height:40px;background:#505050;"></div>
<div style="left:354px;top:11.84px;font-size:12px;line-height:12px;color:#ffffff;font-weight:normal;white-space:pre;transform:scaleX(0.9746);transform-origin:left top;">02. LK Audited 2021.xlsx  -  Excel (Product Activation Failed)</div>
<div style="left:783px;top:10.34px;font-size:12px;line-height:12px;color:#000000;font-weight:normal;white-space:pre;transform:scaleX(0.9808);transform-origin:left top;">Sign in</div>
<div style="left:20px;top:43.34px;font-size:12px;line-height:12px;color:#ffffff;font-weight:normal;white-space:pre;transform:scaleX(0.9305);transform-origin:left top;">File</div>
<div style="left:73px;top:43.34px;font-size:12px;line-height:12px;color:#ffffff;font-weight:normal;white-space:pre;transform:scaleX(1.0307);transform-origin:left top;">Home</div>
<div style="left:133px;top:43.34px;font-size:12px;line-height:12px;color:#ffffff;font-weight:normal;white-space:pre;transform:scaleX(0.9662);transform-origin:left top;">Insert</div>
<div style="left:189px;top:43.34px;font-size:12px;line-height:12px;color:#ffffff;font-weight:normal;white-space:pre;transform:scaleX(0.9645);transform-origin:left top;">Page Layout</div>
<div style="left:281px;top:43.34px;font-size:12px;line-height:12px;color:#ffffff;font-weight:normal;white-space:pre;transform:scaleX(0.9797);transform-origin:left top;">Formulas</div>
<div style="left:357px;top:43.34px;font-size:12px;line-height:12px;color:#ffffff;font-weight:normal;white-space:pre;transform:scaleX(0.9464);transform-origin:left top;">Data</div>
<div style="left:408px;top:43.34px;font-size:12px;line-height:12px;color:#ffffff;font-weight:normal;white-space:pre;transform:scaleX(0.9401);transform-origin:left top;">Review</div>
<div style="left:472px;top:43.34px;font-size:12px;line-height:12px;color:#ffffff;font-weight:normal;white-space:pre;transform:scaleX(0.9691);transform-origin:left top;">View</div>
<div style="left:524px;top:43.34px;font-size:12px;line-height:12px;color:#ffffff;font-weight:normal;white-space:pre;transform:scaleX(1.0127);transform-origin:left top;">Help</div>
<div style="left:605px;top:43.34px;font-size:12px;line-height:12px;color:#ffffff;font-weight:normal;white-space:pre;transform:scaleX(1.0062);transform-origin:left top;">Tell me what you want to do</div>
<div style="left:14px;top:141.84px;font-size:12px;line-height:12px;color:#ffffff;font-weight:normal;white-space:pre;transform:scaleX(0.9732);transform-origin:left top;">Clipboard</div>
<div style="left:192px;top:141.84px;font-size:12px;line-height:12px;color:#ffffff;font-weight:normal;white-space:pre;transform:scaleX(0.9577);transform-origin:left top;">Font</div>
<div style="left:384px;top:141.84px;font-size:12px;line-height:12px;color:#ffffff;font-weight:normal;white-space:pre;transform:scaleX(0.9930);transform-origin:left top;">Alignment</div>
<div style="left:531px;top:141.84px;font-size:12px;line-height:12px;color:#ffffff;font-weight:normal;white-space:pre;transform:scaleX(0.9605);transform-origin:left top;">Number</div>
<div style="left:686px;top:141.84px;font-size:12px;line-height:12px;color:#ffffff;font-weight:normal;white-space:pre;transform:scaleX(0.8566);transform-origin:left top;">Styles</div>
<div style="left:825px;top:141.84px;font-size:12px;line-height:12px;color:#ffffff;font-weight:normal;white-space:pre;transform:scaleX(0.8623);transform-origin:left top;">Cells</div>
<div style="left:911px;top:141.84px;font-size:12px;line-height:12px;color:#ffffff;font-weight:normal;white-space:pre;transform:scaleX(0.9808);transform-origin:left top;">Editing</div>
<div style="left:16px;top:106.84px;font-size:12px;line-height:12px;color:#5a5a5a;font-weight:normal;white-space:pre;transform:scaleX(0.8798);transform-origin:left top;">Paste</div>
<div style="left:107px;top:79.99px;font-size:13px;line-height:13px;color:#5f5f5f;font-weight:normal;white-space:pre;transform:scaleX(0.8841);transform-origin:left top;">Arial</div>
<div style="left:232px;top:80.84px;font-size:12px;line-height:12px;color:#5f5f5f;font-weight:normal;white-space:pre;">8</div>
<div style="left:279px;top:79.3px;font-size:15px;line-height:15px;color:#5f5f5f;font-weight:normal;white-space:pre;">A</div>
<div style="left:304px;top:81.84px;font-size:12px;line-height:12px;color:#5f5f5f;font-weight:normal;white-space:pre;">A</div>
<div style="left:110.5px;top:110.84px;font-size:12px;line-height:12px;color:#4e4e4e;font-weight:bold;white-space:pre;">B</div>
<div style="left:135.5px;top:110.42px;font-size:12.5px;line-height:12.5px;color:#4e4e4e;font-weight:bold;white-space:pre;font-style:italic;font-family:Liberation Serif,serif;">I</div>
<div style="left:158.5px;top:110.34px;font-size:12px;line-height:12px;color:#4e4e4e;font-weight:bold;white-space:pre;">U</div>
<div style="left:288.5px;top:109.3px;font-size:15px;line-height:15px;color:#5a5a5a;font-weight:normal;white-space:pre;">A</div>
<div style="left:562px;top:95.15px;font-size:14px;line-height:14px;color:#4f4f4f;font-weight:normal;white-space:pre;">%</div>
<div style="left:641.5px;top:72.84px;font-size:12px;line-height:12px;color:#555555;font-weight:normal;white-space:pre;transform:scaleX(1.0146);transform-origin:left top;">Conditional Formatting</div>
<div style="left:641.5px;top:95.84px;font-size:12px;line-height:12px;color:#555555;font-weight:normal;white-space:pre;transform:scaleX(0.9496);transform-origin:left top;">Format as Table</div>
<div style="left:641.5px;top:118.84px;font-size:12px;line-height:12px;color:#555555;font-weight:normal;white-space:pre;transform:scaleX(0.9261);transform-origin:left top;">Cell Styles</div>
<div style="left:821.5px;top:72.84px;font-size:12px;line-height:12px;color:#555555;font-weight:normal;white-space:pre;transform:scaleX(0.9495);transform-origin:left top;">Insert</div>
<div style="left:821.5px;top:95.84px;font-size:12px;line-height:12px;color:#555555;font-weight:normal;white-space:pre;transform:scaleX(0.9514);transform-origin:left top;">Delete</div>
<div style="left:821.5px;top:118.84px;font-size:12px;line-height:12px;color:#555555;font-weight:normal;white-space:pre;transform:scaleX(0.9864);transform-origin:left top;">Format</div>
<div style="left:12px;top:174.92px;font-size:12.5px;line-height:12.5px;color:#ffffff;font-weight:normal;white-space:pre;transform:scaleX(0.9591);transform-origin:left top;">C34</div>
<div style="left:222px;top:173.15px;font-size:14px;line-height:14px;color:#e6e6e6;font-weight:bold;white-space:pre;font-style:italic;font-family:Liberation Serif,serif;">f</div>
<div style="left:227.5px;top:178.03px;font-size:10px;line-height:10px;color:#e6e6e6;font-weight:bold;white-space:pre;font-style:italic;font-family:Liberation Serif,serif;">x</div>
<div style="left:262px;top:175.42px;font-size:12.5px;line-height:12.5px;color:#ffffff;font-weight:normal;white-space:pre;transform:scaleX(0.9748);transform-origin:left top;">600000000</div>
<div style="left:26.99px;top:207.34px;font-size:12px;line-height:12px;color:#ececec;font-weight:normal;white-space:pre;">A</div>
<div style="left:147.49px;top:207.34px;font-size:12px;line-height:12px;color:#ececec;font-weight:normal;white-space:pre;">B</div>
<div style="left:354.66px;top:207.34px;font-size:12px;line-height:12px;color:#ececec;font-weight:normal;white-space:pre;">C</div>
<div style="left:511.16px;top:207.34px;font-size:12px;line-height:12px;color:#ececec;font-weight:normal;white-space:pre;">D</div>
<div style="left:639.49px;top:207.34px;font-size:12px;line-height:12px;color:#ececec;font-weight:normal;white-space:pre;">E</div>
<div style="left:744.83px;top:207.34px;font-size:12px;line-height:12px;color:#ececec;font-weight:normal;white-space:pre;">F</div>
<div style="left:884.33px;top:207.34px;font-size:12px;line-height:12px;color:#ececec;font-weight:normal;white-space:pre;">G</div>
<div style="left:6px;top:267.49px;font-size:13px;line-height:13px;color:#d6d6d6;font-weight:normal;white-space:pre;transform:scaleX(0.9676);transform-origin:left top;">49</div>
<div style="left:6px;top:287.49px;font-size:13px;line-height:13px;color:#d6d6d6;font-weight:normal;white-space:pre;transform:scaleX(0.9676);transform-origin:left top;">50</div>
<div style="left:6px;top:307.49px;font-size:13px;line-height:13px;color:#d6d6d6;font-weight:normal;white-space:pre;transform:scaleX(0.9676);transform-origin:left top;">51</div>
<div style="left:6px;top:327.49px;font-size:13px;line-height:13px;color:#d6d6d6;font-weight:normal;white-space:pre;transform:scaleX(0.9676);transform-origin:left top;">52</div>
<div style="left:6px;top:347.49px;font-size:13px;line-height:13px;color:#d6d6d6;font-weight:normal;white-space:pre;transform:scaleX(0.9676);transform-origin:left top;">53</div>
<div style="left:6px;top:377.49px;font-size:13px;line-height:13px;color:#d6d6d6;font-weight:normal;white-space:pre;transform:scaleX(0.9676);transform-origin:left top;">54</div>
<div style="left:6px;top:397.49px;font-size:13px;line-height:13px;color:#d6d6d6;font-weight:normal;white-space:pre;transform:scaleX(0.9676);transform-origin:left top;">55</div>
<div style="left:6px;top:427.49px;font-size:13px;line-height:13px;color:#d6d6d6;font-weight:normal;white-space:pre;transform:scaleX(0.9676);transform-origin:left top;">56</div>
<div style="left:6px;top:447.49px;font-size:13px;line-height:13px;color:#d6d6d6;font-weight:normal;white-space:pre;transform:scaleX(0.9676);transform-origin:left top;">57</div>
<div style="left:6px;top:477.49px;font-size:13px;line-height:13px;color:#d6d6d6;font-weight:normal;white-space:pre;transform:scaleX(0.9676);transform-origin:left top;">58</div>
<div style="left:6px;top:497.49px;font-size:13px;line-height:13px;color:#d6d6d6;font-weight:normal;white-space:pre;transform:scaleX(0.9676);transform-origin:left top;">59</div>
<div style="left:6px;top:517.49px;font-size:13px;line-height:13px;color:#d6d6d6;font-weight:normal;white-space:pre;transform:scaleX(0.9676);transform-origin:left top;">60</div>
<div style="left:6px;top:537.49px;font-size:13px;line-height:13px;color:#d6d6d6;font-weight:normal;white-space:pre;transform:scaleX(0.9676);transform-origin:left top;">61</div>
<div style="left:6px;top:557.49px;font-size:13px;line-height:13px;color:#d6d6d6;font-weight:normal;white-space:pre;transform:scaleX(0.9676);transform-origin:left top;">62</div>
<div style="left:6px;top:577.49px;font-size:13px;line-height:13px;color:#d6d6d6;font-weight:normal;white-space:pre;transform:scaleX(0.9676);transform-origin:left top;">63</div>
<div style="left:6px;top:597.49px;font-size:13px;line-height:13px;color:#d6d6d6;font-weight:normal;white-space:pre;transform:scaleX(0.9676);transform-origin:left top;">64</div>
<div style="left:6px;top:617.49px;font-size:13px;line-height:13px;color:#d6d6d6;font-weight:normal;white-space:pre;transform:scaleX(0.9676);transform-origin:left top;">65</div>
<div style="left:6px;top:637.49px;font-size:13px;line-height:13px;color:#d6d6d6;font-weight:normal;white-space:pre;transform:scaleX(0.9676);transform-origin:left top;">66</div>
<div style="left:6px;top:657.49px;font-size:13px;line-height:13px;color:#d6d6d6;font-weight:normal;white-space:pre;transform:scaleX(0.9676);transform-origin:left top;">67</div>
<div style="left:57px;top:224.69px;font-size:11px;line-height:11px;color:#000000;font-weight:normal;white-space:pre;transform:scaleX(0.9933);transform-origin:left top;">Transfer Bantuan Keuangan ke Desa</div>
<div style="left:57px;top:239.69px;font-size:11px;line-height:11px;color:#000000;font-weight:normal;white-space:pre;transform:scaleX(0.9667);transform-origin:left top;">(Dana Desa dari Pemerintah Pusat dan</div>
<div style="left:57px;top:254.69px;font-size:11px;line-height:11px;color:#000000;font-weight:normal;white-space:pre;transform:scaleX(0.9766);transform-origin:left top;">Bantuan Keuangan Lainnya dari Kab/Kota</div>
<div style="left:57px;top:269.69px;font-size:11px;line-height:11px;color:#000000;font-weight:normal;white-space:pre;transform:scaleX(0.9925);transform-origin:left top;">ke Desa)</div>
<div style="left:57px;top:288.69px;font-size:11px;line-height:11px;color:#000000;font-weight:normal;white-space:pre;transform:scaleX(0.9939);transform-origin:left top;">Transfer Bantuan Keuangan Lainnya</div>
<div style="left:152.77px;top:307.19px;font-size:11px;line-height:11px;color:#000000;font-weight:bold;white-space:pre;transform:scaleX(0.9350);transform-origin:right top;">SURPLUS / (DEFISIT)</div>
<div style="left:39px;top:329.19px;font-size:11px;line-height:11px;color:#000000;font-weight:bold;white-space:pre;transform:scaleX(0.9870);transform-origin:left top;">PEMBIAYAAN</div>
<div style="left:48.5px;top:349.19px;font-size:11px;line-height:11px;color:#000000;font-weight:bold;white-space:pre;transform:scaleX(0.9601);transform-origin:left top;">PENERIMAAN PEMBIAYAAN</div>
<div style="left:57px;top:365.19px;font-size:11px;line-height:11px;color:#000000;font-weight:normal;white-space:pre;transform:scaleX(0.9710);transform-origin:left top;">Penggunaan Sisa Lebih Perhitungan</div>
<div style="left:57px;top:380.19px;font-size:11px;line-height:11px;color:#000000;font-weight:normal;white-space:pre;transform:scaleX(1.0062);transform-origin:left top;">Anggaran (SiLPA)</div>
<div style="left:48.5px;top:399.19px;font-size:11px;line-height:11px;color:#000000;font-weight:bold;white-space:pre;transform:scaleX(0.9504);transform-origin:left top;">PENGELUARAN PEMBIAYAAN</div>
<div style="left:57px;top:415.19px;font-size:11px;line-height:11px;color:#000000;font-weight:normal;white-space:pre;transform:scaleX(0.9734);transform-origin:left top;">Penyertaan Modal (Investasi) Pemerintah</div>
<div style="left:57px;top:430.19px;font-size:11px;line-height:11px;color:#000000;font-weight:normal;white-space:pre;transform:scaleX(0.9757);transform-origin:left top;">Daerah</div>
<div style="left:151.94px;top:447.19px;font-size:11px;line-height:11px;color:#000000;font-weight:bold;white-space:pre;transform:scaleX(0.9727);transform-origin:right top;">PEMBIAYAAN NETTO</div>
<div style="left:60.27px;top:465.19px;font-size:11px;line-height:11px;color:#000000;font-weight:bold;white-space:pre;transform:scaleX(0.9571);transform-origin:right top;">SISA LEBIH PEMBIAYAAN ANGGARAN</div>
<div style="left:225.09px;top:479.19px;font-size:11px;line-height:11px;color:#000000;font-weight:bold;white-space:pre;transform:scaleX(1.0281);transform-origin:right top;">(SILPA)</div>
<div style="left:350.12px;top:224.69px;font-size:11px;line-height:11px;color:#000000;font-weight:normal;white-space:pre;transform:scaleX(0.9820);transform-origin:right top;">282.384.521.400,00</div>
<div style="left:479.12px;top:224.69px;font-size:11px;line-height:11px;color:#000000;font-weight:normal;white-space:pre;transform:scaleX(0.9820);transform-origin:right top;">282.040.824.480,00</div>
<div style="left:621.7px;top:224.69px;font-size:11px;line-height:11px;color:#000000;font-weight:normal;white-space:pre;transform:scaleX(0.9820);transform-origin:right top;">(343.696.920,00)</div>
<div style="left:755.97px;top:224.69px;font-size:11px;line-height:11px;color:#000000;font-weight:normal;white-space:pre;transform:scaleX(0.9820);transform-origin:right top;">99,88</div>
<div style="left:884.62px;top:224.69px;font-size:11px;line-height:11px;color:#000000;font-weight:normal;white-space:pre;transform:scaleX(0.9820);transform-origin:right top;">295.725.870.560,00</div>
<div style="left:426.58px;top:284.69px;font-size:11px;line-height:11px;color:#000000;font-weight:normal;white-space:pre;transform:scaleX(0.9820);transform-origin:right top;">0,00</div>
<div style="left:555.58px;top:284.69px;font-size:11px;line-height:11px;color:#000000;font-weight:normal;white-space:pre;transform:scaleX(0.9820);transform-origin:right top;">0,00</div>
<div style="left:697.83px;top:284.69px;font-size:11px;line-height:11px;color:#000000;font-weight:normal;white-space:pre;transform:scaleX(0.9820);transform-origin:right top;">-</div>
<div style="left:762.08px;top:284.69px;font-size:11px;line-height:11px;color:#000000;font-weight:normal;white-space:pre;transform:scaleX(0.9820);transform-origin:right top;">0,00</div>
<div style="left:896.86px;top:284.69px;font-size:11px;line-height:11px;color:#000000;font-weight:normal;white-space:pre;transform:scaleX(0.9820);transform-origin:right top;">1.037.081.408,00</div>
<div style="left:355.03px;top:304.69px;font-size:11px;line-height:11px;color:#000000;font-weight:bold;white-space:pre;transform:scaleX(0.9820);transform-origin:right top;">(2.790.267.809,00)</div>
<div style="left:485.23px;top:304.69px;font-size:11px;line-height:11px;color:#000000;font-weight:bold;white-space:pre;transform:scaleX(0.9820);transform-origin:right top;">22.333.423.862,07</div>
<div style="left:609.73px;top:304.69px;font-size:11px;line-height:11px;color:#000000;font-weight:bold;white-space:pre;transform:scaleX(0.9820);transform-origin:right top;">25.123.691.671,07</div>
<div style="left:746.52px;top:304.69px;font-size:11px;line-height:11px;color:#000000;font-weight:bold;white-space:pre;transform:scaleX(0.9820);transform-origin:right top;">(800,40)</div>
<div style="left:896.86px;top:304.69px;font-size:11px;line-height:11px;color:#000000;font-weight:bold;white-space:pre;transform:scaleX(0.9820);transform-origin:right top;">5.525.899.433,77</div>
<div style="left:362.36px;top:344.69px;font-size:11px;line-height:11px;color:#000000;font-weight:bold;white-space:pre;transform:scaleX(0.9820);transform-origin:right top;">4.590.267.809,00</div>
<div style="left:491.36px;top:344.69px;font-size:11px;line-height:11px;color:#000000;font-weight:bold;white-space:pre;transform:scaleX(0.9820);transform-origin:right top;">4.590.267.809,62</div>
<div style="left:680.08px;top:344.69px;font-size:11px;line-height:11px;color:#000000;font-weight:bold;white-space:pre;transform:scaleX(0.9820);transform-origin:right top;">0,62</div>
<div style="left:749.84px;top:344.69px;font-size:11px;line-height:11px;color:#000000;font-weight:bold;white-space:pre;transform:scaleX(0.9820);transform-origin:right top;">100,00</div>
<div style="left:896.86px;top:344.69px;font-size:11px;line-height:11px;color:#000000;font-weight:bold;white-space:pre;transform:scaleX(0.9820);transform-origin:right top;">2.614.368.375,85</div>
<div style="left:362.36px;top:364.69px;font-size:11px;line-height:11px;color:#000000;font-weight:normal;white-space:pre;transform:scaleX(0.9820);transform-origin:right top;">4.590.267.809,00</div>
<div style="left:491.36px;top:364.69px;font-size:11px;line-height:11px;color:#000000;font-weight:normal;white-space:pre;transform:scaleX(0.9820);transform-origin:right top;">4.590.267.809,62</div>
<div style="left:680.08px;top:364.69px;font-size:11px;line-height:11px;color:#000000;font-weight:normal;white-space:pre;transform:scaleX(0.9820);transform-origin:right top;">0,62</div>
<div style="left:749.84px;top:364.69px;font-size:11px;line-height:11px;color:#000000;font-weight:normal;white-space:pre;transform:scaleX(0.9820);transform-origin:right top;">100,00</div>
<div style="left:896.86px;top:364.69px;font-size:11px;line-height:11px;color:#000000;font-weight:normal;white-space:pre;transform:scaleX(0.9820);transform-origin:right top;">2.614.368.375,85</div>
<div style="left:362.36px;top:394.69px;font-size:11px;line-height:11px;color:#000000;font-weight:bold;white-space:pre;transform:scaleX(0.9820);transform-origin:right top;">1.800.000.000,00</div>
<div style="left:491.36px;top:394.69px;font-size:11px;line-height:11px;color:#000000;font-weight:bold;white-space:pre;transform:scaleX(0.9820);transform-origin:right top;">1.800.000.000,00</div>
<div style="left:697.83px;top:394.69px;font-size:11px;line-height:11px;color:#000000;font-weight:bold;white-space:pre;transform:scaleX(0.9820);transform-origin:right top;">-</div>
<div style="left:749.84px;top:394.69px;font-size:11px;line-height:11px;color:#000000;font-weight:bold;white-space:pre;transform:scaleX(0.9820);transform-origin:right top;">100,00</div>
<div style="left:896.86px;top:394.69px;font-size:11px;line-height:11px;color:#000000;font-weight:bold;white-space:pre;transform:scaleX(0.9820);transform-origin:right top;">3.550.000.000,00</div>
<div style="left:362.36px;top:414.69px;font-size:11px;line-height:11px;color:#000000;font-weight:normal;white-space:pre;transform:scaleX(0.9820);transform-origin:right top;">1.800.000.000,00</div>
<div style="left:491.36px;top:414.69px;font-size:11px;line-height:11px;color:#000000;font-weight:normal;white-space:pre;transform:scaleX(0.9820);transform-origin:right top;">1.800.000.000,00</div>
<div style="left:697.83px;top:414.69px;font-size:11px;line-height:11px;color:#000000;font-weight:normal;white-space:pre;transform:scaleX(0.9820);transform-origin:right top;">-</div>
<div style="left:749.84px;top:414.69px;font-size:11px;line-height:11px;color:#000000;font-weight:normal;white-space:pre;transform:scaleX(0.9820);transform-origin:right top;">100,00</div>
<div style="left:896.86px;top:414.69px;font-size:11px;line-height:11px;color:#000000;font-weight:normal;white-space:pre;transform:scaleX(0.9820);transform-origin:right top;">3.550.000.000,00</div>
<div style="left:362.36px;top:444.69px;font-size:11px;line-height:11px;color:#000000;font-weight:bold;white-space:pre;transform:scaleX(0.9820);transform-origin:right top;">2.790.267.809,00</div>
<div style="left:491.36px;top:444.69px;font-size:11px;line-height:11px;color:#000000;font-weight:bold;white-space:pre;transform:scaleX(0.9820);transform-origin:right top;">2.790.267.809,62</div>
<div style="left:680.08px;top:444.69px;font-size:11px;line-height:11px;color:#000000;font-weight:bold;white-space:pre;transform:scaleX(0.9820);transform-origin:right top;">0,62</div>
<div style="left:749.84px;top:444.69px;font-size:11px;line-height:11px;color:#000000;font-weight:bold;white-space:pre;transform:scaleX(0.9820);transform-origin:right top;">100,00</div>
<div style="left:902.7px;top:444.69px;font-size:11px;line-height:11px;color:#000000;font-weight:bold;white-space:pre;transform:scaleX(0.9820);transform-origin:right top;">(935.631.624,15)</div>
<div style="left:426.58px;top:464.69px;font-size:11px;line-height:11px;color:#000000;font-weight:bold;white-space:pre;transform:scaleX(0.9820);transform-origin:right top;">0,00</div>
<div style="left:485.23px;top:464.69px;font-size:11px;line-height:11px;color:#000000;font-weight:bold;white-space:pre;transform:scaleX(0.9820);transform-origin:right top;">25.123.691.671,69</div>
<div style="left:609.73px;top:464.69px;font-size:11px;line-height:11px;color:#000000;font-weight:bold;white-space:pre;transform:scaleX(0.9820);transform-origin:right top;">25.123.691.671,69</div>
<div style="left:762.08px;top:464.69px;font-size:11px;line-height:11px;color:#000000;font-weight:bold;white-space:pre;transform:scaleX(0.9820);transform-origin:right top;">0,00</div>
<div style="left:896.86px;top:464.69px;font-size:11px;line-height:11px;color:#000000;font-weight:bold;white-space:pre;transform:scaleX(0.9820);transform-origin:right top;">4.590.267.809,62</div>
<div style="left:112.5px;top:686.12px;font-size:12.5px;line-height:12.5px;color:#1e7145;font-weight:bold;white-space:pre;transform:scaleX(0.9412);transform-origin:left top;">1.LRA</div>
<div style="left:173.5px;top:686.12px;font-size:12.5px;line-height:12.5px;color:#ffffff;font-weight:normal;white-space:pre;transform:scaleX(0.8714);transform-origin:left top;">2.LPSAL</div>
<div style="left:244.5px;top:686.12px;font-size:12.5px;line-height:12.5px;color:#ffffff;font-weight:normal;white-space:pre;transform:scaleX(1.0151);transform-origin:left top;">3.Neraca</div>
<div style="left:322px;top:686.12px;font-size:12.5px;line-height:12.5px;color:#ffffff;font-weight:normal;white-space:pre;transform:scaleX(0.9406);transform-origin:left top;">4.LO</div>
<div style="left:374.3px;top:686.12px;font-size:12.5px;line-height:12.5px;color:#ffffff;font-weight:normal;white-space:pre;transform:scaleX(0.9101);transform-origin:left top;">5.LAK</div>
<div style="left:433.2px;top:686.12px;font-size:12.5px;line-height:12.5px;color:#ffffff;font-weight:normal;white-space:pre;transform:scaleX(0.8661);transform-origin:left top;">6.LPE</div>
<div style="left:7px;top:712.34px;font-size:12px;line-height:12px;color:#ffffff;font-weight:normal;white-space:pre;transform:scaleX(0.8937);transform-origin:left top;">Ready</div>
<div style="left:990px;top:710.84px;font-size:12px;line-height:12px;color:#ffffff;font-weight:normal;white-space:pre;transform:scaleX(0.8468);transform-origin:left top;">100%</div>
<div style="left:971px;top:733.34px;font-size:12px;line-height:12px;color:#ffffff;font-weight:normal;white-space:pre;transform:scaleX(0.8658);transform-origin:left top;">18:52</div>
<div style="left:955px;top:751.34px;font-size:12px;line-height:12px;color:#ffffff;font-weight:normal;white-space:pre;transform:scaleX(0.9573);transform-origin:left top;">30/09/2022</div>
<div style="position:absolute;left:529px;top:497px;width:387px;height:125px;background:#fff;"></div>
<div style="position:absolute;left:529px;top:505px;width:387px;text-align:center;font-size:15px;line-height:16px;font-weight:bold;color:#000;white-space:pre;">BUPATI OGAN KOMERING ULU SELATAN</div>
<div style="position:absolute;left:529px;top:593px;width:387px;text-align:center;font-size:15px;line-height:16px;font-weight:bold;color:#000;white-space:pre;">POPO ALI MARTOPO</div>
</div></body></html>
